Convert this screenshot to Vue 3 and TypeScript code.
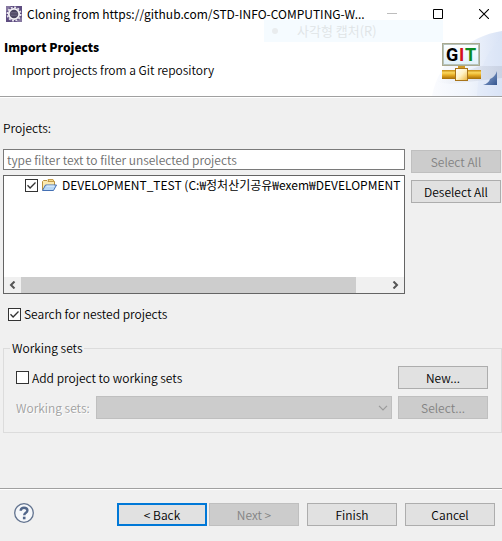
<script setup lang="ts">
import { ref } from 'vue'

interface Project {
  id: number
  label: string
  checked: boolean
}

const filter = ref('')
const nested = ref(true)
const addToSets = ref(false)
const projects = ref<Project[]>([
  { id: 1, label: 'DEVELOPMENT_TEST (C:₩정처산기공유₩exem₩DEVELOPMENT', checked: true },
])

function setAll(checked: boolean): void {
  projects.value.forEach((p) => (p.checked = checked))
}
</script>

<template>
  <div class="dialog">
    <div class="titlebar">
      <svg class="app-icon" width="16" height="16" viewBox="0 0 16 16" aria-hidden="true">
        <rect width="16" height="16" fill="#5d4c80" />
        <path d="M0 0h5L0 6zM16 16h-6l6-5z" fill="#8678a0" />
        <circle cx="8" cy="8" r="6.700" fill="none" stroke="#e9e6ee" stroke-width="1.600" stroke-dasharray="2 1.500" />
        <circle cx="8" cy="8" r="5.200" fill="#4a4460" stroke="#f4f2f6" stroke-width="1.800" />
        <path d="M4.500 6.500h7M4.200 8h7.600M4.500 9.500h7" stroke="#77718c" stroke-width=".6" />
      </svg>
      <span class="title">Cloning from https://github.com/STD-INFO-COMPUTING-W...</span>
      <button class="win" type="button" aria-label="Minimize">
        <svg width="10" height="10" viewBox="0 0 10 10"><path d="M0 4.500h10" stroke="#bdbdbd" /></svg>
      </button>
      <button class="win" type="button" aria-label="Maximize">
        <svg width="10" height="10" viewBox="0 0 10 10"><path d="M.5.5h9v9h-9z" fill="none" stroke="#000" /></svg>
      </button>
      <button class="win" type="button" aria-label="Close">
        <svg width="10" height="10" viewBox="0 0 10 10"><path d="M0 0l10 10M10 0L0 10" stroke="#000" stroke-width="1.100" /></svg>
      </button>
    </div>

    <header class="banner">
      <div class="heading">
        <h1>Import Projects</h1>
        <p>Import projects from a Git repository</p>
      </div>
      <svg class="art" width="72" height="68" viewBox="0 0 72 68" aria-hidden="true">
        <defs>
          <linearGradient id="sky" x1="0" y1="0" x2="1" y2="0">
            <stop offset="0" stop-color="#fafbfe" />
            <stop offset=".5" stop-color="#f1f5fc" />
            <stop offset="1" stop-color="#d9e3f6" />
          </linearGradient>
          <linearGradient id="pipe" x1="0" y1="0" x2="0" y2="1">
            <stop offset="0" stop-color="#c58a14" />
            <stop offset=".3" stop-color="#fbd75c" />
            <stop offset=".6" stop-color="#e3a821" />
            <stop offset="1" stop-color="#a36c0a" />
          </linearGradient>
          <linearGradient id="node" x1="0" y1="0" x2="1" y2="1">
            <stop offset="0" stop-color="#fff" />
            <stop offset=".5" stop-color="#fff2c6" />
            <stop offset="1" stop-color="#edb63c" />
          </linearGradient>
          <linearGradient id="plate" x1="0" y1="0" x2="0" y2="1">
            <stop offset="0" stop-color="#fff" />
            <stop offset="1" stop-color="#dff0fa" />
          </linearGradient>
          <linearGradient id="shade" x1="0" y1="0" x2="1" y2="0">
            <stop offset="0" stop-color="#d5d9e2" stop-opacity="0" />
            <stop offset="1" stop-color="#c3cbdc" stop-opacity=".7" />
          </linearGradient>
          <linearGradient id="corner" x1="0" y1="0" x2="1" y2="1">
            <stop offset="0" stop-color="#9db5dc" />
            <stop offset="1" stop-color="#34558f" />
          </linearGradient>
        </defs>
        <path d="M72 3C38 8 8 34 2 68h70z" fill="url(#sky)" />
        <path d="M72 10C58 22 48 40 47 68h25z" fill="#dce5f7" opacity=".4" />
        <path d="M6 54L50 38h22v12L20 56z" fill="url(#shade)" />
        <path d="M67 43v14H53q6-2 7-6 5-2 7-8z" fill="url(#corner)" />
        <rect x="28" y="37" width="7" height="5" fill="#d09a24" />
        <rect x="12" y="42" width="39" height="9" fill="url(#pipe)" />
        <rect x="25.500" y="40.500" width="12" height="12" fill="url(#node)" stroke="#a8741a" />
        <rect x="12.500" y="15.500" width="37" height="22" fill="url(#plate)" stroke="#aaaa91" />
        <rect x="13.500" y="16.500" width="35" height="20" fill="none" stroke="#b6c3bb" />
        <g class="git">
          <text x="16" y="33">G</text>
          <text x="29" y="33" fill="#d4101c">I</text>
          <text x="35" y="33" fill="#0b8a22">T</text>
        </g>
      </svg>
      <div class="ghost"><i></i><span>사각형 캡처(R)</span></div>
    </header>

    <main class="content">
      <label class="caption" for="filter">Projects:</label>
      <div class="chooser">
        <div class="left">
          <input id="filter" v-model="filter" class="filter" type="text" placeholder="type filter text to filter unselected projects" />
          <div class="list">
            <div class="rows">
              <label v-for="p in projects" :key="p.id" class="row">
                <input v-model="p.checked" type="checkbox" class="check" />
                <svg width="16" height="16" viewBox="0 0 16 16" aria-hidden="true">
                  <path d="M1.500 13V4.500l1-1H6l1 1h6.500V8" fill="#fbe9ae" stroke="#b9913f" />
                  <path d="M7 2.500h5l1 2H8z" fill="#f3d78c" stroke="#c59d4b" />
                  <path d="M1.500 13.500L4.500 8h11l-3 5.500z" fill="#b7d7f5" stroke="#4470b4" />
                  <path d="M5.500 9h8" stroke="#e9f5ff" />
                </svg>
                <span>{{ p.label }}</span>
              </label>
            </div>
            <div class="scrollbar">
              <button type="button" aria-label="Scroll left">
                <svg width="7" height="8" viewBox="0 0 7 8"><path d="M5.500.5L2 4l3.500 3.500" fill="none" stroke="#555" stroke-width="2" /></svg>
              </button>
              <div class="track"><div class="thumb"></div></div>
              <button type="button" aria-label="Scroll right">
                <svg width="7" height="8" viewBox="0 0 7 8"><path d="M1.500.5L5 4 1.500 7.500" fill="none" stroke="#555" stroke-width="2" /></svg>
              </button>
            </div>
          </div>
        </div>
        <div class="side">
          <button class="btn" type="button" disabled @click="setAll(true)">Select All</button>
          <button class="btn" type="button" @click="setAll(false)">Deselect All</button>
        </div>
      </div>

      <label class="option nested">
        <input v-model="nested" type="checkbox" class="check" />
        <span>Search for nested projects</span>
      </label>

      <fieldset class="group">
        <legend>Working sets</legend>
        <div class="line">
          <label class="option">
            <input v-model="addToSets" type="checkbox" class="check" />
            <span>Add project to working sets</span>
          </label>
          <button class="btn" type="button">New...</button>
        </div>
        <div class="line">
          <label class="dim" for="sets">Working sets:</label>
          <div class="combo">
            <select id="sets" disabled></select>
            <svg width="10" height="6" viewBox="0 0 10 6" aria-hidden="true"><path d="M1 .8l4 4 4-4" fill="none" stroke="#9b9b9b" stroke-width="1.200" /></svg>
          </div>
          <button class="btn" type="button" disabled>Select...</button>
        </div>
      </fieldset>
    </main>

    <footer class="footer">
      <button class="help" type="button" aria-label="Help">
        <svg width="20" height="20" viewBox="0 0 20 20">
          <circle cx="10" cy="10" r="9.300" fill="#f5f7fa" stroke="#62738f" stroke-width="1.300" />
          <path d="M6.700 7.700C6.800 5.500 8.200 4.700 10 4.700c2 0 3.400 1 3.400 2.700 0 2.400-3.200 2.300-3.200 4.900" fill="none" stroke="#51668a" stroke-width="2.400" />
          <rect x="8.900" y="13.700" width="2.600" height="2.600" fill="#51668a" />
        </svg>
      </button>
      <div class="pair">
        <button class="btn primary" type="button">&lt; Back</button>
        <button class="btn" type="button" disabled>Next &gt;</button>
      </div>
      <button class="btn" type="button">Finish</button>
      <button class="btn" type="button">Cancel</button>
    </footer>
  </div>
</template>

<style>
body {
  background: #f0f0f0;
}
</style>

<style scoped>
.dialog,
.dialog * {
  box-sizing: border-box;
}
.dialog {
  display: flex;
  flex-direction: column;
  min-height: 100vh;
  background: #f0f0f0;
  color: #000;
  font: 350 12px/16px "Noto Sans CJK KR", sans-serif;
}
button,
input,
select {
  font: inherit;
  color: inherit;
  margin: 0;
  padding: 0;
}
.titlebar {
  display: flex;
  align-items: center;
  height: 28px;
  padding-left: 6px;
  overflow: hidden;
  background: #fff;
}
.app-icon {
  flex: none;
}
.title {
  flex: 1;
  min-width: 0;
  margin-left: 5px;
  overflow: hidden;
  font-weight: 400;
  white-space: nowrap;
}
.win {
  display: flex;
  align-items: center;
  justify-content: center;
  flex: none;
  width: 46px;
  height: 28px;
  border: 0;
  background: none;
}
.win:last-child {
  margin-right: -5px;
}
.banner {
  position: relative;
  display: flex;
  justify-content: space-between;
  height: 69px;
  background: #fff;
  border-bottom: 1px solid #a0a0a0;
}
.heading {
  padding: 11px 0 0 4px;
}
h1 {
  margin: 0;
  font-size: 12px;
  line-height: 16px;
  font-weight: 900;
}
p {
  margin: 7px 0 0 8px;
}
.art {
  flex: none;
}
.git {
  font: 700 18px Roboto, sans-serif;
}
.ghost {
  position: absolute;
  top: -8px;
  right: 59px;
  display: flex;
  align-items: center;
  gap: 19px;
  width: 179px;
  height: 22px;
  padding-left: 8px;
  background: #f5fbff;
  color: #dfe4e6;
  font-size: 13px;
  pointer-events: none;
}
.ghost i {
  width: 6px;
  height: 6px;
  border-radius: 50%;
  background: #e9ecee;
}
.content {
  flex: 1;
  padding: 22px 0 0 3px;
  border-top: 1px solid #fff;
}
.caption {
  display: block;
}
.chooser {
  display: flex;
  gap: 6px;
  margin-top: 13px;
  padding-right: 1px;
}
.left {
  flex: 1;
  min-width: 0;
}
.filter {
  display: block;
  width: 100%;
  height: 21px;
  padding: 0 3px;
  border: 1px solid #7a7a7a;
  background: #fff;
}
.filter::placeholder {
  color: #6d6d6d;
  opacity: 1;
}
.list {
  display: flex;
  flex-direction: column;
  height: 119px;
  margin-top: 5px;
  border: 1px solid #646464;
  background: #fff;
}
.rows {
  flex: 1;
  overflow: hidden;
}
.row {
  display: flex;
  align-items: center;
  gap: 3px;
  height: 18px;
  padding-left: 21px;
  font-weight: 400;
  white-space: nowrap;
}
.row svg {
  flex: none;
}
.row span {
  margin-left: 2px;
}
.scrollbar {
  display: flex;
  height: 16px;
  background: #f0f0f0;
}
.scrollbar button {
  display: flex;
  align-items: center;
  justify-content: center;
  width: 17px;
  border: 0;
  background: none;
}
.track {
  flex: 1;
}
.thumb {
  width: 91.500%;
  height: 100%;
  background: #cdcdcd;
}
.side {
  display: flex;
  flex-direction: column;
  gap: 7px;
  padding-top: 1px;
}
.btn {
  flex: none;
  width: 90px;
  height: 23px;
  border: 1px solid #adadad;
  background: #e1e1e1;
  line-height: 20px;
}
.btn:disabled {
  border-color: #bfbfbf;
  background: #ccc;
  color: #838383;
}
.btn.primary {
  border: 2px solid #0078d7;
  line-height: 18px;
}
.check {
  appearance: none;
  flex: none;
  width: 13px;
  height: 13px;
  border: 1px solid #333;
  background: #fff;
}
.check:checked {
  background: #fff url("data:image/svg+xml,%3Csvg xmlns='http://www.w3.org/2000/svg' viewBox='0 0 11 11'%3E%3Cpath d='M1.500 5.300l2.600 2.700 5.400-5.500' fill='none' stroke='%23333' stroke-width='1.300'/%3E%3C/svg%3E");
}
.option {
  display: flex;
  align-items: center;
  gap: 3px;
}
.nested {
  margin-top: 12px;
  padding-left: 5px;
}
.group {
  min-width: 0;
  margin: 18px 0 0;
  padding: 10px 13px 13px 12px;
  border: 1px solid #dcdcdc;
}
legend {
  height: 16px;
  margin-left: -6px;
  padding: 0 2px;
}
.line {
  display: flex;
  align-items: center;
  justify-content: space-between;
  gap: 6px;
}
.line + .line {
  margin-top: 7px;
}
.dim {
  color: #a0a0a0;
  text-shadow: 1px 1px #fff;
}
.combo {
  position: relative;
  flex: 1;
  height: 23px;
}
.combo select {
  display: block;
  appearance: none;
  width: 100%;
  height: 23px;
  border: 1px solid #bfbfbf;
  border-radius: 0;
  background: #ccc;
  opacity: 1;
}
.combo svg {
  position: absolute;
  right: 4px;
  top: 9px;
}
.footer {
  display: flex;
  align-items: flex-start;
  gap: 8px;
  height: 53px;
  padding: 14px 7px 0 14px;
  border-top: 1px solid #a0a0a0;
  box-shadow: inset 0 1px #fff;
}
.help {
  width: 20px;
  height: 20px;
  margin-right: auto;
  border: 0;
  background: none;
}
.help svg {
  display: block;
  overflow: visible;
}
.pair {
  display: flex;
  gap: 2px;
}
</style>
